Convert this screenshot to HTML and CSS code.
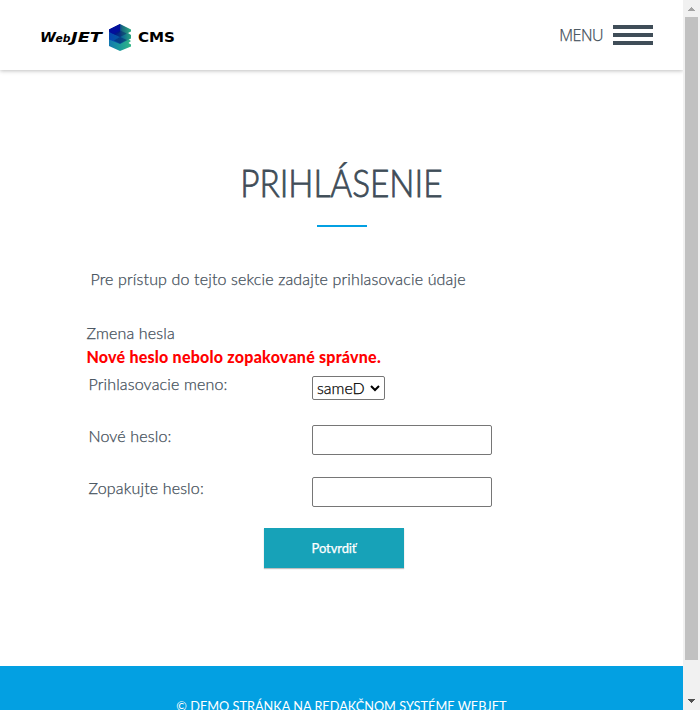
FILE: index.html
```html
<!DOCTYPE html>
<html lang="sk">
<head>
<meta charset="utf-8">
<title>Prihlásenie</title>
<link rel="stylesheet" href="styles.css">
</head>
<body>
<div class="page">
  <header class="header">
    <a class="logo" aria-label="WebJET CMS">
      <svg width="136" height="30" viewBox="0 0 136 30">
        <defs>
          <linearGradient id="g1" x1="0" x2="1"><stop offset="0" stop-color="#021a9c"/><stop offset=".45" stop-color="#052f9a"/><stop offset=".6" stop-color="#18697f"/><stop offset="1" stop-color="#2fae82"/></linearGradient>
          <linearGradient id="g2" x1="0" x2="1"><stop offset="0" stop-color="#0546b4"/><stop offset=".5" stop-color="#06579c"/><stop offset="1" stop-color="#2aa57e"/></linearGradient>
          <linearGradient id="g3" x1="0" x2="1"><stop offset="0" stop-color="#1378b0"/><stop offset=".5" stop-color="#1a9a9a"/><stop offset="1" stop-color="#31b686"/></linearGradient>
        </defs>
        <g class="logo-text">
          <text x="0" y="19.500" textLength="16" lengthAdjust="spacingAndGlyphs" class="slant">W</text>
          <text x="15.500" y="19.500" textLength="15" lengthAdjust="spacingAndGlyphs" class="slant small">eb</text>
          <text x="31" y="19.500" textLength="31" lengthAdjust="spacingAndGlyphs" class="slant">JET</text>
          <text x="98" y="19.500" textLength="37" lengthAdjust="spacingAndGlyphs">CMS</text>
        </g>
        <path fill="url(#g3)" d="M69 16l11 2 8-1 3 2-2.500 2 2.500 1.500v2L80 29l-11-5z"/>
        <path fill="url(#g2)" d="M69 10l11 2 8-1 3 2v3.500L80 22l-11-4.500z"/>
        <path fill="url(#g1)" d="M69 7.500L80 2l11 5.500v2L80 15l-11-5z"/>
        <path fill="#020f9c" d="M69 7.500L80 2v8l-4 3-7-3z"/>
        <path fill="#04266f" d="M74 12l6-3.500 7 3-7 3.500zM74 18.500l6-3.500 7 3-7 3.500z" opacity=".5"/>
      </svg>
    </a>
    <div class="menu"><span class="menu-label">MENU</span><span class="burger"><i></i><i></i><i></i></span></div>
  </header>
  <main class="content">
    <h1 class="title"><span>PRIHLÁSENIE</span></h1>
    <p class="intro">Pre prístup do tejto sekcie zadajte prihlasovacie údaje</p>
    <p class="caption">Zmena hesla</p>
    <p class="error">Nové heslo nebolo zopakované správne.</p>
    <form class="form">
      <label class="l1">Prihlasovacie meno:</label>
      <div class="select"><span>sameD</span><svg width="10" height="7" viewBox="0 0 10 7"><path d="M1 1l4 4 4-4" fill="none" stroke="#000" stroke-width="2"/></svg></div>
      <label class="l2">Nové heslo:</label>
      <input type="password">
      <label class="l3">Zopakujte heslo:</label>
      <input type="password">
    </form>
    <button class="submit" type="button">Potvrdiť</button>
  </main>
  <footer class="footer"><span>© DEMO STRÁNKA NA REDAKČNOM SYSTÉME WEBJET</span></footer>
</div>
<div class="scrollbar">
  <svg width="17" height="17"><path d="M5 11h7v-1h-1v-1h-1v-1h-1v-1h-1v1h-1v1h-1v1h-1z" fill="#a3a3a3"/></svg>
  <div class="thumb"></div>
  <svg class="down" width="17" height="17"><path d="M5 6h7v1h-1v1h-1v1h-1v1h-1v-1h-1v-1h-1v-1h-1z" fill="#505050"/></svg>
</div>
</body>
</html>
```
FILE: styles.css
```css
* { box-sizing: border-box; }
body {
  margin: 0;
  width: 700px;
  height: 710px;
  overflow: hidden;
  display: flex;
  background: #fff;
  color: #3f4d58;
  font: 300 16px/24px Lato, sans-serif;
  letter-spacing: .15px;
  -webkit-text-stroke: .25px currentColor;
}
p, h1 { margin: 0; }
.page { width: 683px; height: 710px; overflow: hidden; }
.header {
  height: 70px;
  padding: 0 30px 0 40px;
  display: flex;
  align-items: center;
  justify-content: space-between;
  box-shadow: 0 1px 4px rgba(0, 0, 0, .25);
}
.logo { display: flex; margin-top: 4px; letter-spacing: 0; }
.logo-text { font: 700 14px "DejaVu Sans", sans-serif; fill: #000; -webkit-text-stroke: .3px #000; }
.slant { font-style: italic; }
.small { font-size: 10.5px; }
.menu { display: flex; align-items: center; gap: 10px; }
.menu-label { font: 300 16px/24px "Open Sans", sans-serif; letter-spacing: -.5px; }
.burger { display: flex; flex-direction: column; gap: 4px; width: 40px; }
.burger i { height: 4px; background: #3f4d58; }
.content { height: 596px; padding: 90px 85px 0; }
.title {
  height: 67px;
  display: flex;
  flex-direction: column;
  align-items: center;
  justify-content: space-between;
  font: 300 37px/46px Lato, sans-serif;
  letter-spacing: 0;
  -webkit-text-stroke: .8px currentColor;
}
.title span { transform: scaleX(.9); }
.title::after { content: ""; width: 50px; height: 2px; background: #03a0e2; }
.intro { margin: 40px 0 0 5.5px; }
.caption { margin: 30px 0 0 1.5px; }
.error { margin-left: 1.5px; color: #f00; font-weight: 900; letter-spacing: .23px; -webkit-text-stroke: 0; }
.form {
  margin: 7px 0 0 3px;
  display: grid;
  grid-template-columns: 224px 180px;
  grid-template-rows: 49px 52px 52px;
}
label { margin: -4px 0 0 .5px; }
.select {
  width: 73px;
  height: 24px;
  border: 1px solid #767676;
  border-radius: 2px;
  display: flex;
  align-items: center;
  justify-content: space-between;
  padding: 0 4px;
  color: #000;
  letter-spacing: 0;
}
input {
  width: 180px;
  height: 30px;
  padding: 2px;
  border: 1px solid #767676;
  border-radius: 2px;
  background: #fff;
}
.l2, .l3 { margin-top: -1px; }
.submit {
  display: block;
  width: 140px;
  height: 40px;
  margin: -1px 0 0 179px;
  padding: 0;
  border: 0;
  background: #17a2b8;
  box-shadow: 0 1px 1px rgba(0, 0, 0, .25);
  color: #fff;
  font: 400 13px/40px Lato, sans-serif;
  letter-spacing: -.1px;
}
.footer {
  height: 160px;
  padding-top: 28px;
  background: #03a0e2;
  color: #fff;
  font: 400 14px/24px Lato, sans-serif;
  letter-spacing: 0;
  text-align: center;
  -webkit-text-stroke: 0;
}
.footer span { display: inline-block; transform: scaleX(.91); }
.scrollbar { width: 17px; height: 710px; background: #f1f1f1; display: flex; flex-direction: column; }
.thumb { width: 13px; height: 643px; margin: 0 2px; background: #c1c1c1; }
.down { margin-top: auto; }
```
